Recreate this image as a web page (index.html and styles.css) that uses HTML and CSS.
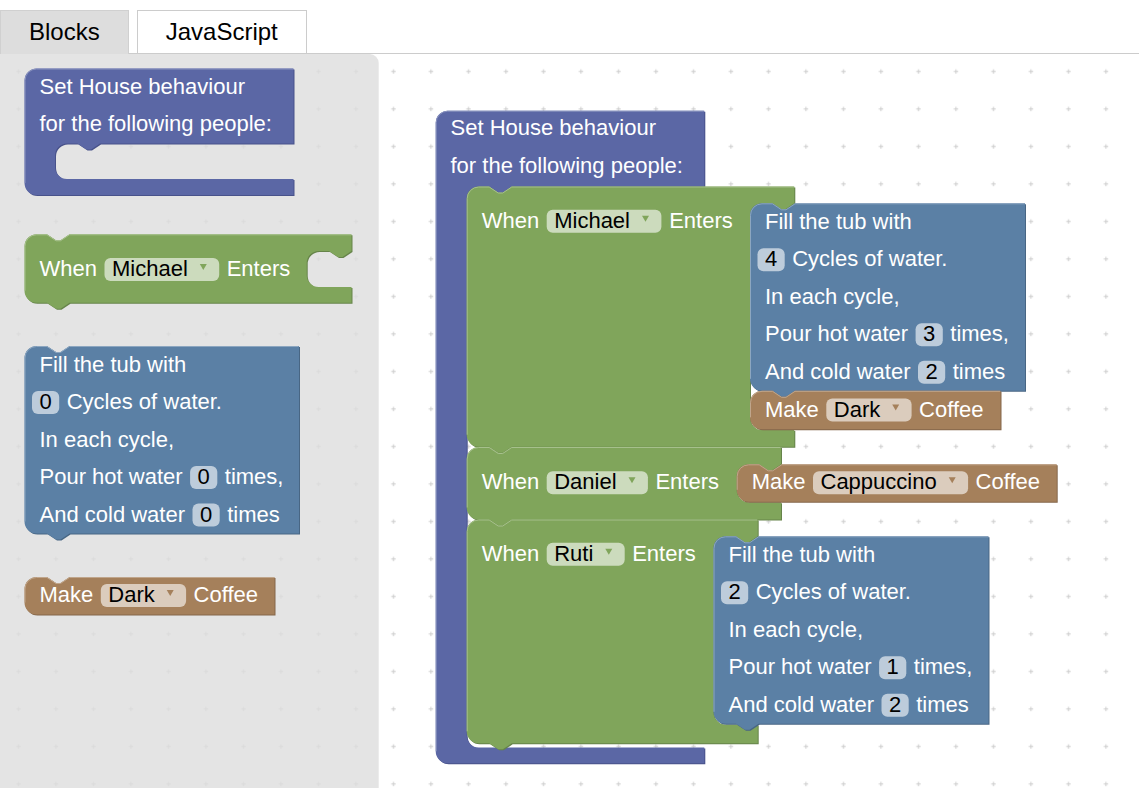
FILE: index.html
```html
<!DOCTYPE html>
<html lang="en">
<head>
<meta charset="utf-8">
<title>Blocks</title>
<link rel="stylesheet" href="styles.css">
</head>
<body>
<div class="tabs">
  <div class="tab tab-blocks">Blocks</div>
  <div class="tab-gap"></div>
  <div class="tab tab-js">JavaScript</div>
  <div class="tab-fill"></div>
</div>
<div class="workspace">
<svg class="canvas" width="1139" height="734" viewBox="0 0 1139 734" xmlns="http://www.w3.org/2000/svg">
  <defs>
    <pattern id="grid" patternUnits="userSpaceOnUse" x="0" y="15.5" width="37.5" height="37.5">
      <path class="gridline" d="M16.25,18.5 H20.75 M18.5,16.25 V20.75"/>
    </pattern>
    <path id="b1" d="M24.5,80.5 a12,12 0 0 1 12,-12 H293.5 V143.5 H100 l-9,6 -4.5,0 -9,-6 H67 a12,12 0 0 0 -12,12 V167 a12,12 0 0 0 12,12 H293.5 V195 H36.5 a12,12 0 0 1 -12,-12 Z"/>
    <path id="b2" d="M24.5,246.3 a12,12 0 0 1 12,-12 H47 l9,6 4.5,0 9,-6 H351.5 V251 l-9,6 -4.5,0 -9,-6 H318.7 a12,12 0 0 0 -12,12 V275 a12,12 0 0 0 12,12 H351.5 V302.7 H69.5 l-9,6 -4.5,0 -9,-6 H36.5 a12,12 0 0 1 -12,-12 Z"/>
    <path id="b3" d="M24.5,358 a12,12 0 0 1 12,-12 H47 l9,6 4.5,0 9,-6 H299 V533.5 H69.5 l-9,6 -4.5,0 -9,-6 H36.5 a12,12 0 0 1 -12,-12 Z"/>
    <path id="b4" d="M24.5,589 a12,12 0 0 1 12,-12 H47 l9,6 4.5,0 9,-6 H274.5 V614.5 H36.5 a12,12 0 0 1 -12,-12 Z"/>
    <path id="b5" d="M435.7,122.7 a12,12 0 0 1 12,-12 H704.3 V186.5 H511.7 l-9,6 -4.5,0 -9,-6 H478.7 a12,12 0 0 0 -12,12 V735.5 a12,12 0 0 0 12,12 H704.3 V763.3 H447.7 a12,12 0 0 1 -12,-12 Z"/>
    <path id="b6" d="M466.7,198.5 a12,12 0 0 1 12,-12 H489.2 l9,6 4.5,0 9,-6 H794.3 V203.3 l-9,6 -4.5,0 -9,-6 H762 a12,12 0 0 0 -12,12 V418 a12,12 0 0 0 12,12 H794.3 V446.7 H511.7 l-9,6 -4.5,0 -9,-6 H478.7 a12,12 0 0 1 -12,-12 Z"/>
    <path id="b7" d="M750,215.3 a12,12 0 0 1 12,-12 H772.5 l9,6 4.5,0 9,-6 H1025 V390.8 H795 l-9,6 -4.5,0 -9,-6 H762 a12,12 0 0 1 -12,-12 Z"/>
    <path id="b8" d="M750,402.8 a12,12 0 0 1 12,-12 H772.5 l9,6 4.5,0 9,-6 H1000.5 V429.3 H762 a12,12 0 0 1 -12,-12 Z"/>
    <path id="b9" d="M466.7,459 a12,12 0 0 1 12,-12 H489.2 l9,6 4.5,0 9,-6 H781 V464.3 l-9,6 -4.5,0 -9,-6 H748.7 a12,12 0 0 0 -12,12 V490.3 a12,12 0 0 0 12,12 H781 V519.5 H511.7 l-9,6 -4.5,0 -9,-6 H478.7 a12,12 0 0 1 -12,-12 Z"/>
    <path id="b10" d="M736.7,476.3 a12,12 0 0 1 12,-12 H759.2 l9,6 4.5,0 9,-6 H1056.7 V501.8 H748.7 a12,12 0 0 1 -12,-12 Z"/>
    <path id="b11" d="M466.7,531.5 a12,12 0 0 1 12,-12 H489.2 l9,6 4.5,0 9,-6 H757.7 V536.3 l-9,6 -4.5,0 -9,-6 H725.5 a12,12 0 0 0 -12,12 V712.5 a12,12 0 0 0 12,12 H757.7 V743.3 H511.7 l-9,6 -4.5,0 -9,-6 H478.7 a12,12 0 0 1 -12,-12 Z"/>
    <path id="b12" d="M713.5,548.3 a12,12 0 0 1 12,-12 H736 l9,6 4.5,0 9,-6 H988.5 V723.8 H758.5 l-9,6 -4.5,0 -9,-6 H725.5 a12,12 0 0 1 -12,-12 Z"/>
  </defs>
  <g transform="translate(0,-54)">
    <rect x="0" y="54" width="1139" height="734" fill="url(#grid)"/>

    <!-- main workspace blocks -->
    <g class="block">
      <use href="#b5" class="dk-purple" transform="translate(1,1)"/>
      <use href="#b5" class="c-purple"/>
      <path class="hl hl-purple" d="M436.2,751.3 V122.7 a11.5,11.5 0 0 1 11.5,-11.5 H703.8"/>
      <text class="t" x="450.5" y="135.3">Set House behaviour</text>
      <text class="t" x="450.5" y="172.8">for the following people:</text>
    </g>

    <g class="block">
      <use href="#b6" class="dk-green" transform="translate(1,1)"/>
      <use href="#b6" class="c-green"/>
      <path class="hl hl-green" d="M467.2,434.7 V198.5 a11.5,11.5 0 0 1 11.5,-11.5 H489.2 l9,6 4.5,0 9,-6 H793.8"/>
      <text class="t" x="481.7" y="227.7">When</text>
      <rect class="fld" x="546.7" y="209.7" width="114.7" height="23" rx="6"/>
      <text class="t ft" x="554.2" y="227.7">Michael</text>
      <path class="arr-green" d="M642,215.7 h7 l-3.5,6 z"/>
      <text class="t" x="669.2" y="227.7">Enters</text>
    </g>

    <g class="block">
      <use href="#b7" class="dk-blue" transform="translate(1,1)"/>
      <use href="#b7" class="c-blue"/>
      <path class="hl hl-blue" d="M750.5,378.8 V215.3 a11.5,11.5 0 0 1 11.5,-11.5 H772.5 l9,6 4.5,0 9,-6 H1024.5"/>
      <text class="t" x="765" y="228.8">Fill the tub with</text>
      <rect class="fld" x="757.5" y="248.3" width="27.2" height="23" rx="6"/>
      <text class="t ft" x="765" y="266.3">4</text>
      <text class="t" x="792.2" y="266.3">Cycles of water.</text>
      <text class="t" x="765" y="303.8">In each cycle,</text>
      <text class="t" x="765" y="341.3">Pour hot water</text>
      <rect class="fld" x="915.6" y="323.3" width="27.2" height="23" rx="6"/>
      <text class="t ft" x="923.1" y="341.3">3</text>
      <text class="t" x="950.3" y="341.3">times,</text>
      <text class="t" x="765" y="378.8">And cold water</text>
      <rect class="fld" x="918" y="360.8" width="27.2" height="23" rx="6"/>
      <text class="t ft" x="925.5" y="378.8">2</text>
      <text class="t" x="952.7" y="378.8">times</text>
    </g>

    <g class="block">
      <use href="#b8" class="dk-brown" transform="translate(1,1)"/>
      <use href="#b8" class="c-brown"/>
      <path class="hl hl-brown" d="M750.5,417.3 V402.8 a11.5,11.5 0 0 1 11.5,-11.5 H772.5 l9,6 4.5,0 9,-6 H1000"/>
      <text class="t" x="765" y="416.5">Make</text>
      <rect class="fld" x="826.3" y="398.5" width="85.3" height="23" rx="6"/>
      <text class="t ft" x="833.8" y="416.5">Dark</text>
      <path class="arr-brown" d="M892.2,404.5 h7 l-3.5,6 z"/>
      <text class="t" x="919.1" y="416.5">Coffee</text>
    </g>

    <g class="block">
      <use href="#b9" class="dk-green" transform="translate(1,1)"/>
      <use href="#b9" class="c-green"/>
      <path class="hl hl-green" d="M467.2,507.5 V459 a11.5,11.5 0 0 1 11.5,-11.5 H489.2 l9,6 4.5,0 9,-6 H780.5"/>
      <text class="t" x="481.7" y="489.3">When</text>
      <rect class="fld" x="546.7" y="471.3" width="101.2" height="23" rx="6"/>
      <text class="t ft" x="554.2" y="489.3">Daniel</text>
      <path class="arr-green" d="M628.5,477.3 h7 l-3.5,6 z"/>
      <text class="t" x="655.4" y="489.3">Enters</text>
    </g>

    <g class="block">
      <use href="#b10" class="dk-brown" transform="translate(1,1)"/>
      <use href="#b10" class="c-brown"/>
      <path class="hl hl-brown" d="M737.2,489.8 V476.3 a11.5,11.5 0 0 1 11.5,-11.5 H759.2 l9,6 4.5,0 9,-6 H1056.2"/>
      <text class="t" x="751.7" y="489.3">Make</text>
      <rect class="fld" x="813" y="471.3" width="155.1" height="23" rx="6"/>
      <text class="t ft" x="820.5" y="489.3">Cappuccino</text>
      <path class="arr-brown" d="M948.7,477.3 h7 l-3.5,6 z"/>
      <text class="t" x="975.6" y="489.3">Coffee</text>
    </g>

    <g class="block">
      <use href="#b11" class="dk-green" transform="translate(1,1)"/>
      <use href="#b11" class="c-green"/>
      <path class="hl hl-green" d="M467.2,731.3 V531.5 a11.5,11.5 0 0 1 11.5,-11.5 H489.2 l9,6 4.5,0 9,-6 H757.2"/>
      <text class="t" x="481.7" y="560.7">When</text>
      <rect class="fld" x="546.7" y="542.7" width="78" height="23" rx="6"/>
      <text class="t ft" x="554.2" y="560.7">Ruti</text>
      <path class="arr-green" d="M605.3,548.7 h7 l-3.5,6 z"/>
      <text class="t" x="632.2" y="560.7">Enters</text>
    </g>

    <g class="block">
      <use href="#b12" class="dk-blue" transform="translate(1,1)"/>
      <use href="#b12" class="c-blue"/>
      <path class="hl hl-blue" d="M714,711.8 V548.3 a11.5,11.5 0 0 1 11.5,-11.5 H736 l9,6 4.5,0 9,-6 H988"/>
      <text class="t" x="728.5" y="561.8">Fill the tub with</text>
      <rect class="fld" x="721" y="581.3" width="27.2" height="23" rx="6"/>
      <text class="t ft" x="728.5" y="599.3">2</text>
      <text class="t" x="755.7" y="599.3">Cycles of water.</text>
      <text class="t" x="728.5" y="636.8">In each cycle,</text>
      <text class="t" x="728.5" y="674.3">Pour hot water</text>
      <rect class="fld" x="879.1" y="656.3" width="27.2" height="23" rx="6"/>
      <text class="t ft" x="886.6" y="674.3">1</text>
      <text class="t" x="913.8" y="674.3">times,</text>
      <text class="t" x="728.5" y="711.8">And cold water</text>
      <rect class="fld" x="881.5" y="693.8" width="27.2" height="23" rx="6"/>
      <text class="t ft" x="889" y="711.8">2</text>
      <text class="t" x="916.2" y="711.8">times</text>
    </g>

    <!-- flyout -->
    <path class="flyout" d="M0,54 H369.7 a9,9 0 0 1 9,9 V800 H0 Z"/>

    <g class="block">
      <use href="#b1" class="dk-purple" transform="translate(1,1)"/>
      <use href="#b1" class="c-purple"/>
      <path class="hl hl-purple" d="M25,183 V80.5 a11.5,11.5 0 0 1 11.5,-11.5 H293"/>
      <text class="t" x="39.5" y="93.5">Set House behaviour</text>
      <text class="t" x="39.5" y="131">for the following people:</text>
    </g>

    <g class="block">
      <use href="#b2" class="dk-green" transform="translate(1,1)"/>
      <use href="#b2" class="c-green"/>
      <path class="hl hl-green" d="M25,290.7 V246.3 a11.5,11.5 0 0 1 11.5,-11.5 H47 l9,6 4.5,0 9,-6 H351"/>
      <text class="t" x="39.5" y="276">When</text>
      <rect class="fld" x="104.5" y="258" width="114.7" height="23" rx="6"/>
      <text class="t ft" x="112" y="276">Michael</text>
      <path class="arr-green" d="M199.8,264 h7 l-3.5,6 z"/>
      <text class="t" x="226.7" y="276">Enters</text>
    </g>

    <g class="block">
      <use href="#b3" class="dk-blue" transform="translate(1,1)"/>
      <use href="#b3" class="c-blue"/>
      <path class="hl hl-blue" d="M25,521.5 V358 a11.5,11.5 0 0 1 11.5,-11.5 H47 l9,6 4.5,0 9,-6 H298.5"/>
      <text class="t" x="39.5" y="371.5">Fill the tub with</text>
      <rect class="fld" x="32" y="391" width="27.2" height="23" rx="6"/>
      <text class="t ft" x="39.5" y="409">0</text>
      <text class="t" x="66.7" y="409">Cycles of water.</text>
      <text class="t" x="39.5" y="446.5">In each cycle,</text>
      <text class="t" x="39.5" y="484">Pour hot water</text>
      <rect class="fld" x="190.1" y="466" width="27.2" height="23" rx="6"/>
      <text class="t ft" x="197.6" y="484">0</text>
      <text class="t" x="224.8" y="484">times,</text>
      <text class="t" x="39.5" y="521.5">And cold water</text>
      <rect class="fld" x="192.5" y="503.5" width="27.2" height="23" rx="6"/>
      <text class="t ft" x="200" y="521.5">0</text>
      <text class="t" x="227.2" y="521.5">times</text>
    </g>

    <g class="block">
      <use href="#b4" class="dk-brown" transform="translate(1,1)"/>
      <use href="#b4" class="c-brown"/>
      <path class="hl hl-brown" d="M25,602.5 V589 a11.5,11.5 0 0 1 11.5,-11.5 H47 l9,6 4.5,0 9,-6 H274"/>
      <text class="t" x="39.5" y="602">Make</text>
      <rect class="fld" x="100.8" y="584" width="85.3" height="23" rx="6"/>
      <text class="t ft" x="108.3" y="602">Dark</text>
      <path class="arr-brown" d="M166.7,590 h7 l-3.5,6 z"/>
      <text class="t" x="193.6" y="602">Coffee</text>
    </g>
  </g>
</svg>
</div>
</body>
</html>
```

FILE: styles.css
```css
html, body {
  margin: 0;
  padding: 0;
  background: #fff;
  overflow: hidden;
}

body {
  width: 1139px;
  height: 788px;
  font-family: "Liberation Sans", Arial, sans-serif;
}

.tabs {
  display: flex;
  align-items: flex-end;
  height: 54px;
  padding-top: 10px;
  box-sizing: border-box;
}

.tab {
  height: 44px;
  box-sizing: border-box;
  padding: 0 28px;
  font-size: 24px;
  line-height: 42px;
  color: #000;
  white-space: nowrap;
}

.tab-blocks {
  background: #ddd;
  border: 1px solid #d0d0d0;
  border-bottom: none;
}

.tab-gap {
  width: 8px;
  height: 44px;
  box-sizing: border-box;
  border-bottom: 1px solid #ccc;
}

.tab-js {
  background: #fff;
  border: 1px solid #ccc;
}

.tab-fill {
  flex: 1;
  height: 44px;
  box-sizing: border-box;
  border-bottom: 1px solid #ccc;
}

.workspace {
  height: 734px;
  overflow: hidden;
}

.canvas {
  display: block;
}

.gridline {
  stroke: #ccc;
  stroke-width: 1;
  fill: none;
}

.flyout {
  fill: #ddd;
  fill-opacity: 0.8;
}

.c-purple { fill: #5b67a5; }
.c-green  { fill: #80a55b; }
.c-blue   { fill: #5b80a5; }
.c-brown  { fill: #a5805b; }

.dk-purple { fill: #48528a; }
.dk-green  { fill: #66844a; }
.dk-blue   { fill: #486684; }
.dk-brown  { fill: #84664a; }

.hl {
  fill: none;
  stroke-width: 1;
}

.hl-purple { stroke: #8c95c0; }
.hl-green  { stroke: #a6c08c; }
.hl-blue   { stroke: #8ca6c0; }
.hl-brown  { stroke: #c0a68c; }

.arr-green { fill: #80a55b; }
.arr-brown { fill: #a5805b; }

.t {
  font-family: "Liberation Sans", Arial, sans-serif;
  font-size: 22px;
  fill: #fff;
}

.t.ft {
  fill: #000;
}

.fld {
  fill: #fff;
  fill-opacity: 0.6;
}
```
